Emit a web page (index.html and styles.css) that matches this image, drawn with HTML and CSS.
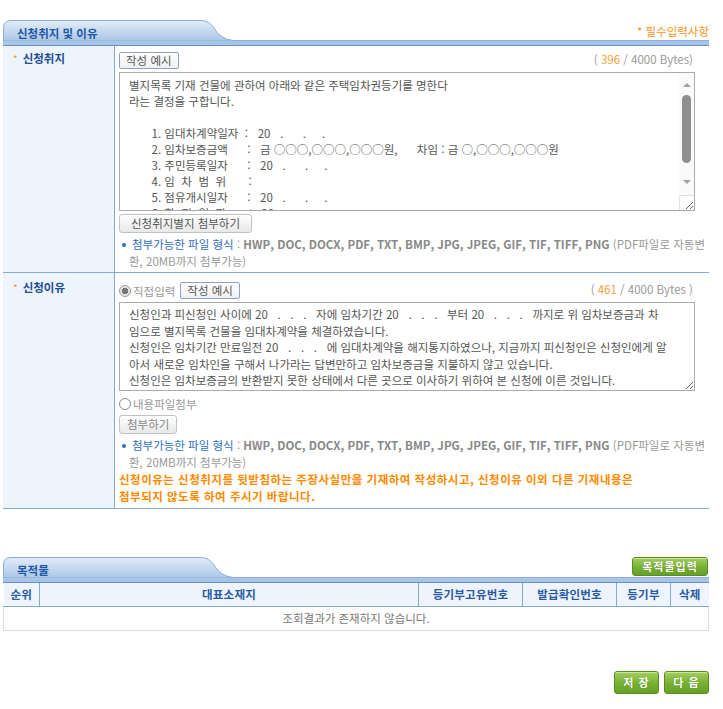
FILE: index.html
```html
<!DOCTYPE html>
<html lang="ko">
<head>
  <meta charset="UTF-8">
  <title>신청취지 및 이유</title>
  <link rel="stylesheet" href="styles.css">
</head>
<body>
  <div class="page">

    <!-- 신청취지 및 이유 -->
    <div class="sec-head">
      <div class="tab">
        <svg class="tab-shape" width="230" height="21" viewBox="0 0 230 21">
          <defs>
            <linearGradient id="tabGrad" x1="0" y1="0" x2="0" y2="1">
              <stop offset="0" stop-color="#e3ecf7"/>
              <stop offset="1" stop-color="#a9c6e7"/>
            </linearGradient>
          </defs>
          <path d="M0.5 21 V8 Q0.5 0.5 8 0.5 H198 Q206 0.5 211 8 Q217 19 230 20.5 V21 Z" fill="url(#tabGrad)" stroke="#8badd6"/>
        </svg>
        <span class="tab-title">신청취지 및 이유</span>
      </div>
      <span class="req">* 필수입력사항</span>
    </div>

    <div class="form-row">
      <div class="label"><span class="star">*</span>신청취지</div>
      <div class="field">
        <div class="field-top">
          <button class="btn-line">작성 예시</button>
          <span class="bytes">( <em>396</em> / 4000 Bytes)</span>
        </div>
        <div class="ta-wrap">
          <textarea class="ta ta-purpose" wrap="off">별지목록 기재 건물에 관하여 아래와 같은 주택임차권등기를 명한다
라는 결정을 구합니다.

       1. 임대차계약일자  :   20   .      .     .
       2. 임차보증금액      :   금 ○○○,○○○,○○○원,      차임 : 금 ○,○○○,○○○원
       3. 주민등록일자      :   20   .      .     .
       4. 임  차  범  위       :
       5. 점유개시일자      :   20   .      .     .
       6. 확  정  일  자       :   20   .      .     .





</textarea>
          <div class="scrollbar">
            <span class="sb-up"></span>
            <span class="sb-thumb"></span>
            <span class="sb-down"></span>
          </div>
          <span class="sb-corner"></span>
        </div>
        <button class="btn-gray">신청취지별지 첨부하기</button>
        <p class="note"><i class="dot"></i><span class="note-key">첨부가능한 파일 형식</span> : <b>HWP, DOC, DOCX, PDF, TXT, BMP, JPG, JPEG, GIF, TIF, TIFF, PNG</b> (PDF파일로 자동변<br>환, 20MB까지 첨부가능)</p>
      </div>
    </div>

    <div class="form-row">
      <div class="label label-2"><span class="star">*</span>신청이유</div>
      <div class="field field-2">
        <div class="field-top">
          <label class="radio-line"><input type="radio" class="radio" name="reason" checked>직접입력</label>
          <button class="btn-line">작성 예시</button>
          <span class="bytes">( <em>461</em> / 4000 Bytes )</span>
        </div>
        <textarea class="ta ta-reason" wrap="off">신청인과 피신청인 사이에 20   .   .   .   자에 임차기간 20   .   .   .   부터 20   .   .   .   까지로 위 임차보증금과 차
임으로 별지목록 건물을 임대차계약을 체결하였습니다.
신청인은 임차기간 만료일전 20   .   .   .   에 임대차계약을 해지통지하였으나, 지금까지 피신청인은 신청인에게 알
아서 새로운 임차인을 구해서 나가라는 답변만하고 임차보증금을 지불하지 않고 있습니다.
신청인은 임차보증금의 반환받지 못한 상태에서 다른 곳으로 이사하기 위하여 본 신청에 이른 것입니다.</textarea>
        <label class="radio-line radio-file"><input type="radio" class="radio" name="reason">내용파일첨부</label>
        <button class="btn-gray btn-small">첨부하기</button>
        <p class="note"><i class="dot"></i><span class="note-key">첨부가능한 파일 형식</span> : <b>HWP, DOC, DOCX, PDF, TXT, BMP, JPG, JPEG, GIF, TIF, TIFF, PNG</b> (PDF파일로 자동변<br>환, 20MB까지 첨부가능)</p>
        <p class="warn">신청이유는 신청취지를 뒷받침하는 주장사실만을 기재하여 작성하시고, 신청이유 이외 다른 기재내용은<br>첨부되지 않도록 하여 주시기 바랍니다.</p>
      </div>
    </div>

    <!-- 목적물 -->
    <div class="sec-head sec-head-2">
      <div class="tab">
        <svg class="tab-shape" width="230" height="21" viewBox="0 0 230 21">
          <defs>
            <linearGradient id="tabGrad2" x1="0" y1="0" x2="0" y2="1">
              <stop offset="0" stop-color="#e3ecf7"/>
              <stop offset="1" stop-color="#a9c6e7"/>
            </linearGradient>
          </defs>
          <path d="M0.5 21 V8 Q0.5 0.5 8 0.5 H198 Q206 0.5 211 8 Q217 19 230 20.5 V21 Z" fill="url(#tabGrad2)" stroke="#8badd6"/>
        </svg>
        <span class="tab-title">목적물</span>
      </div>
      <button class="btn-green btn-add">목적물입력</button>
    </div>

    <table class="list">
      <thead>
        <tr>
          <th class="c-no">순위</th>
          <th class="c-addr">대표소재지</th>
          <th class="c-id">등기부고유번호</th>
          <th class="c-chk">발급확인번호</th>
          <th class="c-reg">등기부</th>
          <th class="c-del">삭제</th>
        </tr>
      </thead>
      <tbody>
        <tr><td colspan="6" class="empty">조회결과가 존재하지 않습니다.</td></tr>
      </tbody>
    </table>

    <div class="actions">
      <button class="btn-green btn-big">저 장</button>
      <button class="btn-green btn-big">다 음</button>
    </div>
  </div>
</body>
</html>
```

FILE: styles.css
```css
* { margin: 0; padding: 0; box-sizing: border-box; }
body { font-family: "Noto Sans CJK KR", sans-serif; font-size: 11.5px; color: #666; background: #fff; }

.page { width: 706px; margin-left: 3px; padding-top: 20px; }

/* section header with tab */
.sec-head {
  display: flex;
  justify-content: space-between;
  align-items: flex-start;
  height: 26px;
  background: linear-gradient(to bottom, transparent 0, transparent 20px, #8fb1db 20px, #8fb1db 21px, #a8c5e7 21px, #a8c5e7 25px, #6690c6 25px, #6690c6 26px);
}
.tab { position: relative; width: 230px; height: 26px; }
.tab-shape { position: absolute; top: 0; left: 0; }
.tab-title {
  position: relative;
  display: block;
  padding: 6px 0 0 14px;
  line-height: 14px;
  font-weight: bold;
  color: #1f58a3;
}
.req { padding-top: 4px; line-height: 14px; color: #f7941d; }

/* form rows */
.form-row {
  display: grid;
  grid-template-columns: 112px 1fr;
  border-bottom: 1px solid #86a8d6;
}
.label {
  background: #eef4fc;
  border-right: 1px solid #86a8d6;
  padding: 5px 0 0 10px;
  line-height: 14px;
  font-weight: bold;
  color: #1d4f96;
}
.label-2 { padding-top: 7px; }
.star { color: #f0982e; font-weight: normal; margin-right: 5px; font-size: 10px; }

.field { padding: 6px 0 2px 4px; }
.field-2 { padding-top: 9px; padding-bottom: 3px; }
.field-top {
  display: flex;
  align-items: flex-start;
  width: 576px;
}
.bytes { margin-left: auto; padding-right: 2px; line-height: 14px; color: #999; }
.bytes em { font-style: normal; color: #f7a13c; }

.btn-line {
  height: 17px;
  padding: 0 6px;
  font: inherit;
  line-height: 15px;
  color: #555;
  background: linear-gradient(#fff, #f0f0f0);
  border: 1px solid #8aa3c4;
  border-radius: 2px;
}
.btn-gray {
  display: block;
  height: 19px;
  margin-top: 3px;
  padding: 0 11px;
  font: inherit;
  line-height: 17px;
  color: #555;
  background: linear-gradient(#fff, #e8e8e8);
  border: 1px solid #c2c2c2;
  border-radius: 3px;
}
.btn-small { padding: 0 7px; color: #888; }

.ta {
  display: block;
  width: 576px;
  padding: 4px 9px;
  font: inherit;
  line-height: 16px;
  color: #555;
  border: 1px solid #ababab;
  background: #fff;
  overflow: hidden;
}
.ta-wrap { position: relative; width: 576px; margin-top: 3px; }
.ta-purpose { height: 139px; padding-right: 24px; }
.ta-reason { height: 89px; margin-top: 3px; padding-top: 3px; line-height: 16.5px; }

/* scrollbar drawn over the first textarea */
.scrollbar {
  position: absolute;
  top: 1px;
  right: 1px;
  width: 15px;
  height: 123px;
  background: #fafafa;
  display: flex;
  flex-direction: column;
  align-items: center;
}
.sb-up, .sb-down { width: 0; height: 0; border-left: 4px solid transparent; border-right: 4px solid transparent; }
.sb-up { margin-top: 10px; border-bottom: 4px solid #a3a3a3; }
.sb-down { margin-top: auto; margin-bottom: 12px; border-top: 4px solid #a3a3a3; }
.sb-thumb { width: 9px; height: 68px; margin-top: 8px; border-radius: 5px; background: #8f8f8f; }
.sb-corner {
  position: absolute;
  right: 1px;
  bottom: 1px;
  width: 15px;
  height: 15px;
  border-left: 1px solid #e2e2e2;
  border-top: 1px solid #e2e2e2;
  pointer-events: none;
}

.note {
  margin-top: 3px;
  padding-left: 10px;
  text-indent: -7px;
  line-height: 17px;
  color: #999;
  white-space: nowrap;
}
.note .dot {
  display: inline-block;
  width: 4px;
  height: 4px;
  margin-right: 6px;
  border-radius: 50%;
  background: #2f6fbf;
  vertical-align: 2px;
}
.note-key { color: #2f6fbf; }
.note b { color: #888; }

.radio-line { display: flex; align-items: center; height: 16px; color: #999; margin: 1px 5px 0 0; }
.radio {
  appearance: none;
  width: 12px;
  height: 12px;
  margin-right: 2px;
  border: 1px solid #8a8a8a;
  border-radius: 50%;
  background: #fff;
}
.radio:checked {
  border-color: #9a9a9a;
  background: radial-gradient(circle, #767676 0, #767676 3px, #e6e6e6 3.5px);
}
.radio-file { margin-top: 5px; }

.warn {
  line-height: 17px;
  font-weight: bold;
  color: #ff8a00;
  letter-spacing: 0.5px;
}

/* second section */
.sec-head-2 { margin-top: 48px; }
.btn-green {
  font: inherit;
  font-size: 11px;
  font-weight: bold;
  color: #fff;
  background: linear-gradient(#a3d05c, #76b032 55%, #68a027);
  border: 1px solid #5a8e22;
  border-radius: 3px;
  box-shadow: inset 0 1px 0 rgba(255,255,255,0.45);
  text-shadow: 0 0 1px rgba(60,100,20,0.6);
}
.btn-add { height: 19px; width: 76px; line-height: 17px; margin-right: 1px; letter-spacing: 1px; }

.list { width: 706px; border-collapse: collapse; table-layout: fixed; }
.list th {
  height: 23px;
  background: #eef4fc;
  border-right: 1px solid #86a8d6;
  border-bottom: 1px solid #86a8d6;
  font-weight: bold;
  color: #2a5aa6;
  letter-spacing: 0.2px;
}
.list th:last-child { border-right: none; }
.c-no { width: 36px; }
.c-id { width: 104px; }
.c-chk { width: 94px; }
.c-reg { width: 54px; }
.c-del { width: 38px; }
.empty {
  height: 24px;
  text-align: center;
  color: #777;
  border: 1px solid #dcdcdc;
  border-top: none;
}

.actions { display: flex; justify-content: flex-end; gap: 5px; margin-top: 40px; }
.btn-big { width: 45px; height: 23px; letter-spacing: 1px; }
```
